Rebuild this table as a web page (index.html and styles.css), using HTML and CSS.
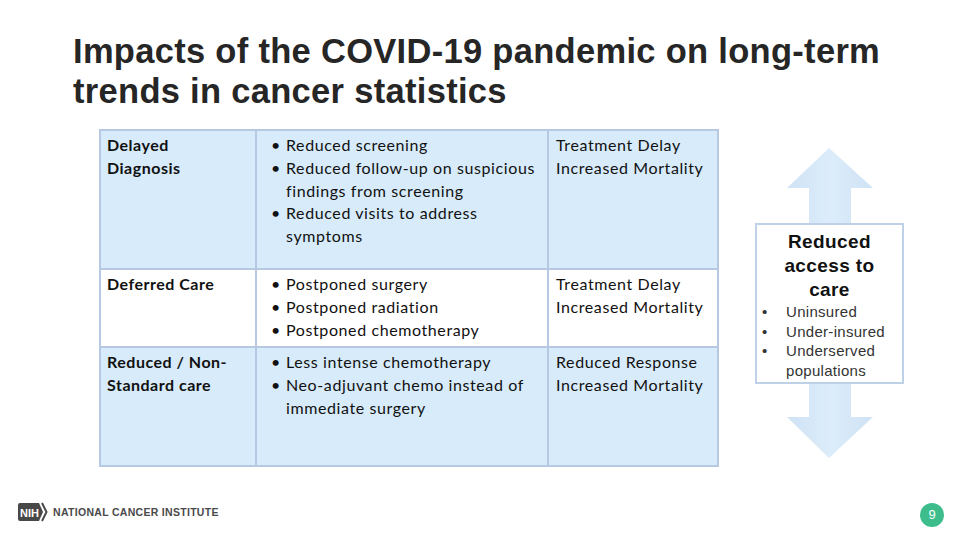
FILE: index.html
```html
<!DOCTYPE html>
<html>
<head>
<meta charset="utf-8">
<link rel="stylesheet" href="styles.css">
</head>
<body>
<div class="slide">
  <h1 class="title">Impacts of the COVID-19 pandemic on long-term<br>trends in cancer statistics</h1>
  <div class="content">
    <table class="grid">
      <colgroup><col class="c1"><col class="c2"><col class="c3"></colgroup>
      <tr class="r1 blue">
        <th>Delayed<br>Diagnosis</th>
        <td><ul>
          <li>Reduced screening</li>
          <li>Reduced follow-up on suspicious findings from screening</li>
          <li>Reduced visits to address symptoms</li>
        </ul></td>
        <td>Treatment Delay<br>Increased Mortality</td>
      </tr>
      <tr class="r2">
        <th>Deferred Care</th>
        <td><ul>
          <li>Postponed surgery</li>
          <li>Postponed radiation</li>
          <li>Postponed chemotherapy</li>
        </ul></td>
        <td>Treatment Delay<br>Increased Mortality</td>
      </tr>
      <tr class="r3 blue">
        <th>Reduced / Non-<br>Standard care</th>
        <td><ul>
          <li>Less intense chemotherapy</li>
          <li>Neo-adjuvant chemo instead of immediate surgery</li>
        </ul></td>
        <td>Reduced Response<br>Increased Mortality</td>
      </tr>
    </table>
    <div class="access">
      <svg class="arrow" width="150" height="312" viewBox="0 0 150 312">
        <defs>
          <linearGradient id="ag" x1="0" y1="0" x2="1" y2="0">
            <stop offset="0" stop-color="#cfe3f5"/>
            <stop offset="0.5" stop-color="#dcecfa"/>
            <stop offset="1" stop-color="#cfe3f5"/>
          </linearGradient>
        </defs>
        <path d="M74 0 L118 40 L96 40 L96 269 L118 269 L74 310 L32 269 L54 269 L54 40 L32 40 Z" fill="url(#ag)"/>
      </svg>
      <div class="box">
        <div class="box-title">Reduced<br>access to<br>care</div>
        <ul class="box-list">
          <li>Uninsured</li>
          <li>Under-insured</li>
          <li>Underserved populations</li>
        </ul>
      </div>
    </div>
  </div>
  <div class="footer">
    <div class="logo">
      <svg width="32" height="20" viewBox="0 0 32 20">
        <path d="M3 1 H22 L26 10 L22 19 H3 Q1 19 1 17 V3 Q1 1 3 1 Z" fill="#484848"/>
        <text x="12.5" y="14.5" text-anchor="middle" class="nih">NIH</text>
        <path d="M25 1 L29.5 10 L25 19" fill="none" stroke="#484848" stroke-width="2"/>
      </svg>
      <span class="nci">NATIONAL CANCER INSTITUTE</span>
    </div>
    <div class="page">9</div>
  </div>
</div>
</body>
</html>
```

FILE: styles.css
```css
html, body {
  margin: 0;
  padding: 0;
  background: #fff;
}
.slide {
  width: 960px;
  height: 540px;
  display: flex;
  flex-direction: column;
  position: relative;
  overflow: hidden;
}
.title {
  margin: 31px 0 0 73px;
  font-family: "Liberation Sans", Arial, sans-serif;
  font-weight: bold;
  font-size: 34.5px;
  line-height: 40px;
  letter-spacing: 0.3px;
  color: #262626;
}
.content {
  display: flex;
  margin: 18px 0 0 99px;
  align-items: flex-start;
}
.grid {
  border-collapse: collapse;
  font-family: Lato, "Open Sans", sans-serif;
  font-size: 16px;
  line-height: 22.8px;
  letter-spacing: 0.6px;
  color: #111;
  border: 2px solid #b7c9e2;
}
.c1 { width: 156px; }
.c2 { width: 292px; }
.c3 { width: 170px; }
.grid th, .grid td {
  border: 2px solid #b7c9e2;
  vertical-align: top;
  text-align: left;
  padding: 3px 6px 0 6px;
}
.grid th { font-weight: bold; letter-spacing: 0.5px; }
.blue th, .blue td { background: #d7ebfa; }
.r1 { height: 139px; }
.r2 { height: 78px; }
.r3 { height: 119px; }
.grid ul {
  margin: 0;
  padding: 0 0 0 23px;
  list-style: none;
}
.grid li::before {
  content: "•";
  display: inline-block;
  width: 15px;
  margin-left: -15px;
}
.grid td:last-child { padding-left: 7px; }
.access {
  position: relative;
  width: 150px;
  height: 312px;
  margin: 19px 0 0 36px;
}
.arrow {
  display: block;
}
.box {
  position: absolute;
  left: 0;
  top: 75px;
  width: 149px;
  height: 161px;
  background: #fff;
  border: 2px solid #bfd1e6;
  box-sizing: border-box;
  font-family: "Liberation Sans", Arial, sans-serif;
  display: flex;
  flex-direction: column;
  align-items: center;
  padding-top: 5px;
}
.box-title {
  font-weight: bold;
  font-size: 19px;
  line-height: 24px;
  letter-spacing: 0.4px;
  text-align: center;
  color: #111;
}
.box-list {
  margin: 0;
  padding: 0 0 0 29px;
  list-style: none;
  font-size: 15px;
  line-height: 19.5px;
  letter-spacing: 0.3px;
  color: #333;
  align-self: stretch;
}
.box-list li::before {
  content: "•";
  display: inline-block;
  width: 24px;
  margin-left: -24px;
  padding-left: 0;
  box-sizing: border-box;
}
.footer {
  margin-top: auto;
  height: 40px;
  display: flex;
  align-items: flex-start;
  justify-content: space-between;
  padding: 0 16px 0 17px;
}
.logo {
  display: flex;
  align-items: center;
  gap: 4px;
  margin-top: 2px;
}
.logo svg { display: block; }
.nih {
  font-family: "Liberation Sans", Arial, sans-serif;
  font-weight: bold;
  font-size: 11px;
  fill: #fff;
}
.nci {
  font-family: "Liberation Sans", Arial, sans-serif;
  font-weight: bold;
  font-size: 10.5px;
  letter-spacing: 0.3px;
  color: #4a4a4a;
}
.page {
  width: 24px;
  height: 24px;
  border-radius: 50%;
  background: #3cbd8b;
  color: #fff;
  font-family: "Liberation Sans", Arial, sans-serif;
  font-size: 13px;
  line-height: 24px;
  text-align: center;
  margin-top: 3px;
}
```
